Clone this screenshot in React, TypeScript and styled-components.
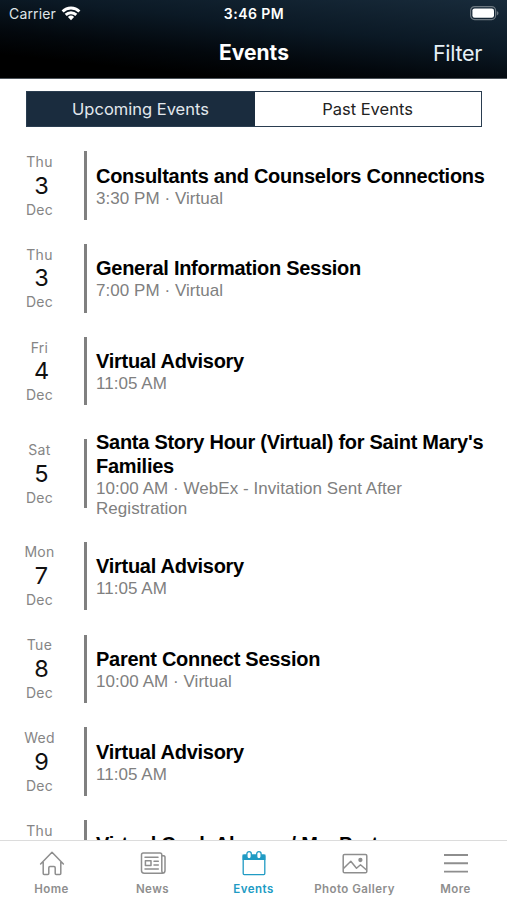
import React from "react";
import styled, { createGlobalStyle } from "styled-components";

const Global = createGlobalStyle`
  * { box-sizing: border-box; }
  body { margin: 0; background: #fff; }
`;

const Screen = styled.div`
  width: 507px;
  height: 900px;
  display: flex;
  flex-direction: column;
  overflow: hidden;
  background: #fff;
  font-family: Inter, sans-serif;
`;

const Header = styled.header`
  height: 79px;
  flex: none;
  color: #fff;
  background: linear-gradient(186deg, #182b3b 0%, #0b1925 38%, #03080d 64%, #000 82%);
  border-bottom: 1px solid #4b5258;
`;

const StatusBar = styled.div`
  height: 27px;
  display: grid;
  grid-template-columns: 1fr auto 1fr;
  align-items: center;
  padding: 0 8px 0 9px;
  font-size: 14px;
`;

const Carrier = styled.span`
  display: flex;
  align-items: center;
  gap: 5px;
  color: #dfe4e8;
  letter-spacing: 0.15px;
`;

const Clock = styled.span`
  font-weight: 600;
  font-size: 14px;
  letter-spacing: 0.45px;
`;

const BatterySlot = styled.span`
  display: flex;
  justify-content: flex-end;
`;

const NavBar = styled.div`
  height: 51px;
  display: grid;
  grid-template-columns: 1fr auto 1fr;
  align-items: center;
  padding: 0 25px 0 26px;
`;

const NavTitle = styled.h1`
  margin: 0;
  font-size: 21px;
  font-weight: 700;
  line-height: 26px;
  grid-column: 2;
`;

const FilterButton = styled.button`
  justify-self: end;
  padding: 0;
  border: 0;
  background: none;
  color: #e6f0f7;
  font: 400 21.5px/26px Inter, sans-serif;
  letter-spacing: -0.3px;
`;

const Segments = styled.div`
  flex: none;
  display: grid;
  grid-template-columns: 228px 1fr;
  height: 36px;
  margin: 12px 25px 12.2px 26px;
  border: 1px solid #2a3d50;
`;

const Segment = styled.button<{ $active?: boolean }>`
  border: 0;
  padding: 0 1px 0 0;
  background: ${(p) => (p.$active ? "#1a2c3e" : "#fff")};
  color: ${(p) => (p.$active ? "#e2e8ed" : "#222")};
  font: 400 16.5px/20px Inter, sans-serif;
`;

const List = styled.main`
  flex: 1;
  min-height: 0;
  overflow: hidden;
`;

const Row = styled.article`
  display: flex;
  align-items: center;
  min-height: 92.8px;
  padding: 11px 14px 11px 0;
`;

const DateBlock = styled.div`
  width: 84px;
  flex: none;
  display: flex;
  flex-direction: column;
  padding-right: 5px;
  align-items: center;
`;

const DatePart = styled.span`
  font-size: 14px;
  line-height: 19.6px;
  letter-spacing: 0.3px;
  color: #858585;
`;

const Day = styled.span`
  font-size: 23.5px;
  line-height: 28px;
  padding-left: 4px;
  color: #111;
`;

const Divider = styled.span`
  width: 3px;
  height: 68.5px;
  flex: none;
  background: #808080;
`;

const Details = styled.div`
  padding: 1px 0 0 9px;
  flex: 1;
  min-width: 0;
  font-family: "Liberation Sans", sans-serif;
`;

const Title = styled.h2`
  margin: 0 0 1px;
  font-size: 20px;
  line-height: 24px;
  font-weight: 700;
  letter-spacing: -0.27px;
  color: #000;
  white-space: pre-line;
`;

const Meta = styled.p`
  margin: 0;
  font-size: 17px;
  line-height: 20px;
  letter-spacing: 0.05px;
  color: #808080;
  white-space: pre-line;
`;

const TabBar = styled.nav`
  height: 60px;
  flex: none;
  display: grid;
  grid-template-columns: repeat(5, 101px);
  justify-content: center;
  background: #fff;
  border-top: 1px solid #dcdcdc;
`;

const Tab = styled.a<{ $active?: boolean }>`
  display: flex;
  flex-direction: column;
  align-items: center;
  padding-top: 9px;
  color: ${(p) => (p.$active ? "#209bc4" : "#8e8e8e")};
  font-size: 11.5px;
  font-weight: 600;
  line-height: 14px;
  letter-spacing: 0.45px;
  white-space: nowrap;

  svg { margin-bottom: 6px; }
`;

const Wifi = () => (
  <svg width="20" height="15" viewBox="0 0 20 15" fill="#fff">
    <path d="M10 14.2 13.1 11a4.5 4.5 0 0 0-6.2 0Z" />
    <path d="M3.7 7.8a8.9 8.9 0 0 1 12.6 0l-2 2.1a6.1 6.1 0 0 0-8.6 0Z" />
    <path d="M.6 4.5a13.3 13.3 0 0 1 18.8 0l-2 2a10.5 10.5 0 0 0-14.8 0Z" />
  </svg>
);

const Battery = () => (
  <svg width="30" height="15" viewBox="0 0 30 15">
    <rect x="1.6" y=".6" width="25" height="13" rx="4" fill="none" stroke="#6d7881" strokeWidth="1.2" />
    <rect x="3.4" y="2.4" width="21.6" height="9.4" rx="2.2" fill="#fff" />
    <path d="M27.8 5v4.4c2.2-.9 2.2-3.5 0-4.4Z" fill="#6d7881" />
  </svg>
);

const HomeIcon = () => (
  <svg width="26" height="26" viewBox="0 0 26 26" fill="none" stroke="currentColor" strokeWidth="1.5" strokeLinejoin="round" strokeLinecap="round">
    <path d="M1.6 14 13 2.2 24.4 14M4.2 12v11.6q0 .9.9.9h3.8q.9 0 .9-.9V17.7q0-1.2 1.2-1.2h4q1.2 0 1.2 1.2v5.9q0 .9.9.9h3.8q.9 0 .9-.9V12" />
  </svg>
);

const NewsIcon = () => (
  <svg width="26" height="26" viewBox="0 0 26 26" fill="none" stroke="currentColor" strokeWidth="1.5" strokeLinejoin="round" strokeLinecap="round">
    <path d="M21.8 21V4.8Q21.8 3 20 3H3.3Q1.5 3 1.5 4.8v15.7q0 2.7 2.7 2.7h18q2.8 0 2.8-2.8V7.2q0-1.6-3.2-1.6V21q0 1.6 1.2 2" />
    <path d="M5 7.3h13M14 11.2h4.3M14 15h4.3M5 18.9h13.3" />
    <rect x="5.4" y="10.8" width="5.6" height="4.8" />
  </svg>
);

const EventsIcon = () => (
  <svg width="26" height="26" viewBox="0 0 26 26" fill="none" stroke="currentColor" strokeWidth="1.3">
    <path d="M2.2 5.2h21.6v4.2H2.2Z" fill="currentColor" />
    <rect x="2.2" y="5.2" width="21.6" height="19.4" rx="1" />
    <rect x="5.9" y="1.6" width="4.4" height="7.2" rx="2.2" fill="#fff" />
    <rect x="15.7" y="1.6" width="4.4" height="7.2" rx="2.2" fill="#fff" />
  </svg>
);

const PhotoIcon = () => (
  <svg width="26" height="26" viewBox="0 0 26 26" fill="none" stroke="currentColor" strokeWidth="1.5" strokeLinejoin="round">
    <rect x="1.2" y="4.4" width="23.6" height="18.4" rx="1.4" />
    <path d="m1.5 18.5 7.3-7.3 5.7 7 4-3.4 6 5.2" />
    <circle cx="18.4" cy="10" r="1.4" fill="currentColor" />
  </svg>
);

const MoreIcon = () => (
  <svg width="26" height="26" viewBox="0 0 26 26" fill="none" stroke="currentColor" strokeWidth="1.9">
    <path d="M1 5h24M1 13.3h24M1 21.6h24" />
  </svg>
);

const events = [
  { dow: "Thu", day: 3, title: "Consultants and Counselors Connections", meta: "3:30 PM · Virtual" },
  { dow: "Thu", day: 3, title: "General Information Session", meta: "7:00 PM · Virtual" },
  { dow: "Fri", day: 4, title: "Virtual Advisory", meta: "11:05 AM" },
  {
    dow: "Sat",
    day: 5,
    title: "Santa Story Hour (Virtual) for Saint Mary's\nFamilies",
    meta: "10:00 AM · WebEx - Invitation Sent After\nRegistration",
  },
  { dow: "Mon", day: 7, title: "Virtual Advisory", meta: "11:05 AM" },
  { dow: "Tue", day: 8, title: "Parent Connect Session", meta: "10:00 AM · Virtual" },
  { dow: "Wed", day: 9, title: "Virtual Advisory", meta: "11:05 AM" },
  { dow: "Thu", day: 10, title: "Virtual Cook Along w/ Ms. Porter", meta: "5:00 PM" },
];

const tabs = [
  { label: "Home", Icon: HomeIcon },
  { label: "News", Icon: NewsIcon },
  { label: "Events", Icon: EventsIcon },
  { label: "Photo Gallery", Icon: PhotoIcon },
  { label: "More", Icon: MoreIcon },
];

export default function App() {
  return (
    <Screen>
      <Global />
      <Header>
        <StatusBar>
          <Carrier>Carrier <Wifi /></Carrier>
          <Clock>3:46 PM</Clock>
          <BatterySlot><Battery /></BatterySlot>
        </StatusBar>
        <NavBar>
          <NavTitle>Events</NavTitle>
          <FilterButton>Filter</FilterButton>
        </NavBar>
      </Header>
      <Segments>
        <Segment $active>Upcoming Events</Segment>
        <Segment>Past Events</Segment>
      </Segments>
      <List>
        {events.map((e, i) => (
          <Row key={i}>
            <DateBlock>
              <DatePart>{e.dow}</DatePart>
              <Day>{e.day}</Day>
              <DatePart>Dec</DatePart>
            </DateBlock>
            <Divider />
            <Details>
              <Title>{e.title}</Title>
              <Meta>{e.meta}</Meta>
            </Details>
          </Row>
        ))}
      </List>
      <TabBar>
        {tabs.map(({ label, Icon }) => (
          <Tab key={label} $active={label === "Events"}>
            <Icon />
            {label}
          </Tab>
        ))}
      </TabBar>
    </Screen>
  );
}
